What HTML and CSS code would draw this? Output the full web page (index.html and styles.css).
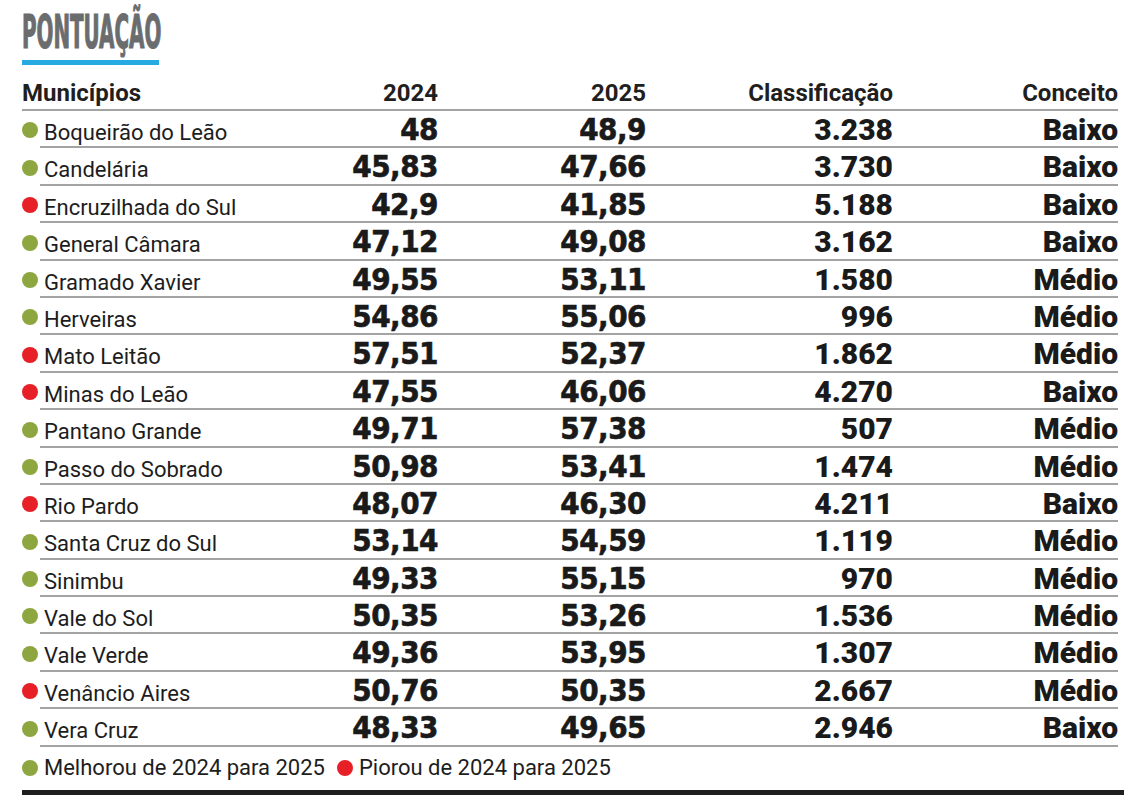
FILE: index.html
```html
<!DOCTYPE html>
<html lang="pt-BR">
<head>
<meta charset="utf-8">
<title>Pontuação</title>
<link rel="stylesheet" href="styles.css">
</head>
<body>
<div class="page">
  <div class="title-wrap">
    <h1 class="title"><span class="title-text">PONTUAÇÃO</span></h1>
    <div class="title-bar"></div>
  </div>

  <div class="head">
    <div class="h-name">Municípios</div>
    <div class="h-num">2024</div>
    <div class="h-num">2025</div>
    <div class="h-num">Classificação</div>
    <div class="h-num">Conceito</div>
  </div>

  <div class="rows">
    <div class="row"><span class="dot up"></span><div class="cells"><span class="name">Boqueirão do Leão</span><span class="score">48</span><span class="score">48,9</span><span class="rank">3.238</span><span class="rank">Baixo</span></div></div>
    <div class="row"><span class="dot up"></span><div class="cells"><span class="name">Candelária</span><span class="score">45,83</span><span class="score">47,66</span><span class="rank">3.730</span><span class="rank">Baixo</span></div></div>
    <div class="row"><span class="dot down"></span><div class="cells"><span class="name">Encruzilhada do Sul</span><span class="score">42,9</span><span class="score">41,85</span><span class="rank">5.188</span><span class="rank">Baixo</span></div></div>
    <div class="row"><span class="dot up"></span><div class="cells"><span class="name">General Câmara</span><span class="score">47,12</span><span class="score">49,08</span><span class="rank">3.162</span><span class="rank">Baixo</span></div></div>
    <div class="row"><span class="dot up"></span><div class="cells"><span class="name">Gramado Xavier</span><span class="score">49,55</span><span class="score">53,11</span><span class="rank">1.580</span><span class="rank">Médio</span></div></div>
    <div class="row"><span class="dot up"></span><div class="cells"><span class="name">Herveiras</span><span class="score">54,86</span><span class="score">55,06</span><span class="rank">996</span><span class="rank">Médio</span></div></div>
    <div class="row"><span class="dot down"></span><div class="cells"><span class="name">Mato Leitão</span><span class="score">57,51</span><span class="score">52,37</span><span class="rank">1.862</span><span class="rank">Médio</span></div></div>
    <div class="row"><span class="dot down"></span><div class="cells"><span class="name">Minas do Leão</span><span class="score">47,55</span><span class="score">46,06</span><span class="rank">4.270</span><span class="rank">Baixo</span></div></div>
    <div class="row"><span class="dot up"></span><div class="cells"><span class="name">Pantano Grande</span><span class="score">49,71</span><span class="score">57,38</span><span class="rank">507</span><span class="rank">Médio</span></div></div>
    <div class="row"><span class="dot up"></span><div class="cells"><span class="name">Passo do Sobrado</span><span class="score">50,98</span><span class="score">53,41</span><span class="rank">1.474</span><span class="rank">Médio</span></div></div>
    <div class="row"><span class="dot down"></span><div class="cells"><span class="name">Rio Pardo</span><span class="score">48,07</span><span class="score">46,30</span><span class="rank">4.211</span><span class="rank">Baixo</span></div></div>
    <div class="row"><span class="dot up"></span><div class="cells"><span class="name">Santa Cruz do Sul</span><span class="score">53,14</span><span class="score">54,59</span><span class="rank">1.119</span><span class="rank">Médio</span></div></div>
    <div class="row"><span class="dot up"></span><div class="cells"><span class="name">Sinimbu</span><span class="score">49,33</span><span class="score">55,15</span><span class="rank">970</span><span class="rank">Médio</span></div></div>
    <div class="row"><span class="dot up"></span><div class="cells"><span class="name">Vale do Sol</span><span class="score">50,35</span><span class="score">53,26</span><span class="rank">1.536</span><span class="rank">Médio</span></div></div>
    <div class="row"><span class="dot up"></span><div class="cells"><span class="name">Vale Verde</span><span class="score">49,36</span><span class="score">53,95</span><span class="rank">1.307</span><span class="rank">Médio</span></div></div>
    <div class="row"><span class="dot down"></span><div class="cells"><span class="name">Venâncio Aires</span><span class="score">50,76</span><span class="score">50,35</span><span class="rank">2.667</span><span class="rank">Médio</span></div></div>
    <div class="row"><span class="dot up"></span><div class="cells"><span class="name">Vera Cruz</span><span class="score">48,33</span><span class="score">49,65</span><span class="rank">2.946</span><span class="rank">Baixo</span></div></div>
  </div>

  <div class="legend">
    <span class="dot up"></span><span class="legend-text">Melhorou de 2024 para 2025</span>
    <span class="dot down"></span><span class="legend-text">Piorou de 2024 para 2025</span>
  </div>

  <div class="bottom-bar"></div>
</div>
</body>
</html>
```

FILE: styles.css
```css
html, body {
  margin: 0;
  padding: 0;
  background: #ffffff;
}

body {
  font-family: Roboto, "Liberation Sans", sans-serif;
  color: #1d1d1d;
}

.page {
  width: 1096px;
  padding: 9px 0 0 22px;
}

/* Title */
.title-wrap {
  display: flex;
  flex-direction: column;
  align-items: flex-start;
}

.title {
  margin: 0;
  height: 46px;
  font-family: "DejaVu Sans Condensed", "DejaVu Sans", sans-serif;
  font-stretch: condensed;
  font-weight: 700;
  font-size: 46px;
  line-height: 46px;
  color: #6b6c6e;
  width: 137px;
  white-space: nowrap;
}

.title-text {
  display: inline-block;
  transform: scaleX(0.48);
  transform-origin: left center;
  -webkit-text-stroke: 1.2px #6b6c6e;
}

.title-bar {
  margin-top: 5px;
  width: 137px;
  height: 5px;
  background: #27a9e1;
}

/* Header */
.head {
  margin-top: 16px;
  display: grid;
  grid-template-columns: 316px 100px 208px 247px 225px;
  align-items: baseline;
  padding-bottom: 4px;
  border-bottom: 2px solid #a3a3a3;
  font-family: Roboto, "Liberation Sans", sans-serif;
  font-weight: 700;
  font-size: 24px;
  line-height: 24px;
  color: #1f1f1f;
}

.h-num {
  text-align: right;
}

/* Rows */
.row {
  display: flex;
  align-items: flex-end;
}

.dot {
  flex: none;
  display: inline-block;
  width: 16px;
  height: 16px;
  border-radius: 50%;
}

.row .dot {
  margin: 0 2px 10px 0;
}

.dot.up {
  background: #8ea63f;
}

.dot.down {
  background: #e71f27;
}

.cells {
  flex: 1;
  box-sizing: border-box;
  height: 37.4px;
  padding-top: 3px;
  display: grid;
  grid-template-columns: 298px 100px 208px 247px 225px;
  align-items: baseline;
  border-bottom: 2px solid #a3a3a3;
}

.name {
  padding-left: 4px;
  font-family: Roboto, "Liberation Sans", sans-serif;
  font-weight: 400;
  font-size: 22px;
  line-height: 1;
  color: #1d1d1d;
  white-space: nowrap;
}

.score {
  text-align: right;
  font-family: "DejaVu Sans Condensed", "DejaVu Sans", sans-serif;
  font-stretch: condensed;
  font-weight: 700;
  font-size: 31px;
  line-height: 1;
  letter-spacing: -0.5px;
  color: #1a1a1a;
  -webkit-text-stroke: 0.6px #1a1a1a;
}

.rank {
  text-align: right;
  font-family: Roboto, "Liberation Sans", sans-serif;
  font-weight: 900;
  font-size: 30px;
  line-height: 1;
  color: #1a1a1a;
}

/* Legend */
.legend {
  margin-top: 10px;
  display: flex;
  align-items: center;
  font-family: Roboto, "Liberation Sans", sans-serif;
  font-size: 22px;
  line-height: 22px;
  color: #1d1d1d;
}

.legend .dot {
  margin-right: 6px;
}

.legend-text {
  margin-right: 12px;
}

.bottom-bar {
  margin-top: 11px;
  width: 1102px;
  height: 5px;
  background: #1e1e1e;
}
```
